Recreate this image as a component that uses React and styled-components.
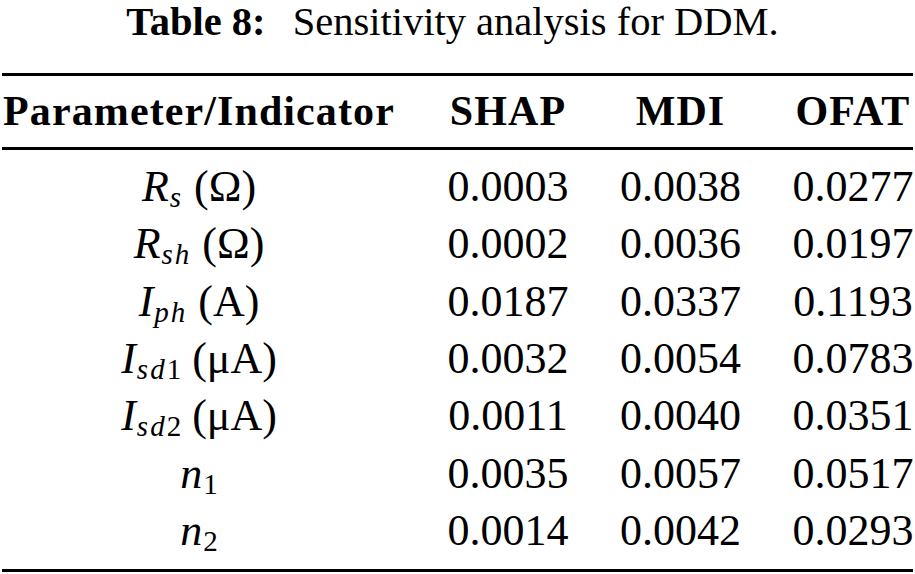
import styled, { createGlobalStyle } from "styled-components";

const rows = [
  { id: "rs", v: "R", sub: "s", unit: "(Ω)", shap: "0.0003", mdi: "0.0038", ofat: "0.0277" },
  { id: "rsh", v: "R", sub: "sh", unit: "(Ω)", shap: "0.0002", mdi: "0.0036", ofat: "0.0197" },
  { id: "iph", v: "I", sub: "ph", unit: "(A)", shap: "0.0187", mdi: "0.0337", ofat: "0.1193" },
  { id: "isd1", v: "I", sub: "sd", idx: "1", unit: "(μA)", shap: "0.0032", mdi: "0.0054", ofat: "0.0783" },
  { id: "isd2", v: "I", sub: "sd", idx: "2", unit: "(μA)", shap: "0.0011", mdi: "0.0040", ofat: "0.0351" },
  { id: "n1", v: "n", idx: "1", shap: "0.0035", mdi: "0.0057", ofat: "0.0517" },
  { id: "n2", v: "n", idx: "2", shap: "0.0014", mdi: "0.0042", ofat: "0.0293" },
];

export default function App() {
  return (
    <>
      <GlobalStyle />
      <Page>
        <Caption>
          <CaptionLabel>Table 8:</CaptionLabel> Sensitivity analysis for DDM.
        </Caption>
        <Table>
          <HeadRow>
            <Cell>Parameter/Indicator</Cell>
            <Cell>SHAP</Cell>
            <Cell>MDI</Cell>
            <Cell>OFAT</Cell>
          </HeadRow>
          <Body>
            {rows.map((r) => (
              <Row key={r.id}>
                <Cell>
                  <Var>{r.v}</Var>
                  <Sub>
                    {r.sub && <SubVar>{r.sub}</SubVar>}
                    {r.idx}
                  </Sub>
                  {r.unit && <> {r.unit}</>}
                </Cell>
                <Cell>{r.shap}</Cell>
                <Cell>{r.mdi}</Cell>
                <Cell>{r.ofat}</Cell>
              </Row>
            ))}
          </Body>
        </Table>
      </Page>
    </>
  );
}

const GlobalStyle = createGlobalStyle`
  body {
    margin: 0;
    background: #ffffff;
    color: #000000;
    font-family: "Liberation Serif", "Times New Roman", serif;
  }
`;

const Page = styled.div`
  width: 915px;
  height: 574px;
  overflow: hidden;
  padding: 0 2px;
  box-sizing: border-box;
`;

const Caption = styled.p`
  margin: 0;
  padding-right: 10px;
  font-size: 40.5px;
  line-height: 44px;
  text-align: center;
  white-space: nowrap;
`;

const CaptionLabel = styled.span`
  font-weight: bold;
  margin-right: 17px;
`;

const Table = styled.div`
  margin-top: 29px;
  border-top: 3px solid #000;
  border-bottom: 3px solid #000;
`;

const Row = styled.div`
  display: grid;
  grid-template-columns: 394px repeat(3, 121px);
  column-gap: 51.5px;
  height: 57.33px;
  font-size: 44px;
  line-height: 57.33px;
  white-space: nowrap;
`;

const HeadRow = styled(Row)`
  height: 71px;
  line-height: 71px;
  font-size: 42px;
  font-weight: bold;
  letter-spacing: 1.1px;
  border-bottom: 3px solid #000;
`;

const Body = styled.div`
  padding: 8px 0 10px;
`;

const Cell = styled.div`
  text-align: center;
`;

const Var = styled.i`
  font-style: italic;
`;

const Sub = styled.span`
  font-size: 29px;
  line-height: 0;
  vertical-align: -6px;
  margin-left: 1px;
`;

const SubVar = styled.i`
  font-style: italic;
  letter-spacing: 2px;
`;
